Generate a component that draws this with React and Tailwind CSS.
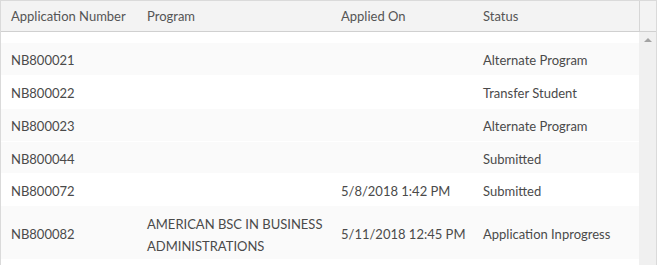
import React from "react";

const rows = [
  { id: "NB800021", program: "", applied: "", status: "Alternate Program", bg: "bg-[#fafafa]", h: "h-[33px]" },
  { id: "NB800022", program: "", applied: "", status: "Transfer Student", bg: "bg-white", h: "h-[33px]" },
  { id: "NB800023", program: "", applied: "", status: "Alternate Program", bg: "bg-[#fafafa]", h: "h-[33px]" },
  { id: "NB800044", program: "", applied: "", status: "Submitted", bg: "bg-[#fafafa]", h: "h-[32px]" },
  { id: "NB800072", program: "", applied: "5/8/2018 1:42 PM", status: "Submitted", bg: "bg-white", h: "h-[32px]" },
  {
    id: "NB800082",
    program: "AMERICAN BSC IN BUSINESS ADMINISTRATIONS",
    applied: "5/11/2018 12:45 PM",
    status: "Application Inprogress",
    bg: "bg-[#fafafa]",
    h: "h-[54px]",
  },
];

const cols = "grid grid-cols-[136px_194px_142px_1fr] items-center";

const App = () => {
  return (
    <div
      className="w-[657px] h-[265px] overflow-hidden border-l border-t border-r border-[#dadada] bg-white text-[13px] text-[#555]"
      style={{ fontFamily: "Lato, 'Liberation Sans', sans-serif" }}
    >
      <div className="flex h-[31px] bg-[#f3f3f3] border-b border-[#d0d0d0]">
        <div className={`${cols} w-[638px] h-full pt-[2px]`}>
          <div className="pl-[10px]">Application Number</div>
          <div className="pl-[10px]">Program</div>
          <div className="pl-[10px]">Applied On</div>
          <div className="pl-[10px]">Status</div>
        </div>
        <div className="flex-1 border-l border-[#d6d6d6]" />
      </div>

      <div className="flex h-[233px]">
        <div className="w-[638px] flex flex-col">
          <div className="h-[11px] bg-white" />
          {rows.map((r) => (
            <div key={r.id} className={`${cols} ${r.h} ${r.bg} pt-[4px] border-b border-white text-[#4a4a4a]`}>
              <div className="pl-[10px]">{r.id}</div>
              <div className="pl-[10px] leading-[22px]">{r.program}</div>
              <div className="pl-[10px]">{r.applied}</div>
              <div className="pl-[10px]">{r.status}</div>
            </div>
          ))}
        </div>
        <div className="flex-1 bg-[#f0f0f0] flex justify-center pt-[6px]">
          <div className="w-0 h-0 border-l-[4px] border-r-[4px] border-b-[4px] border-l-transparent border-r-transparent border-b-[#a3a3a3]" />
        </div>
      </div>
    </div>
  );
};

export default App;
